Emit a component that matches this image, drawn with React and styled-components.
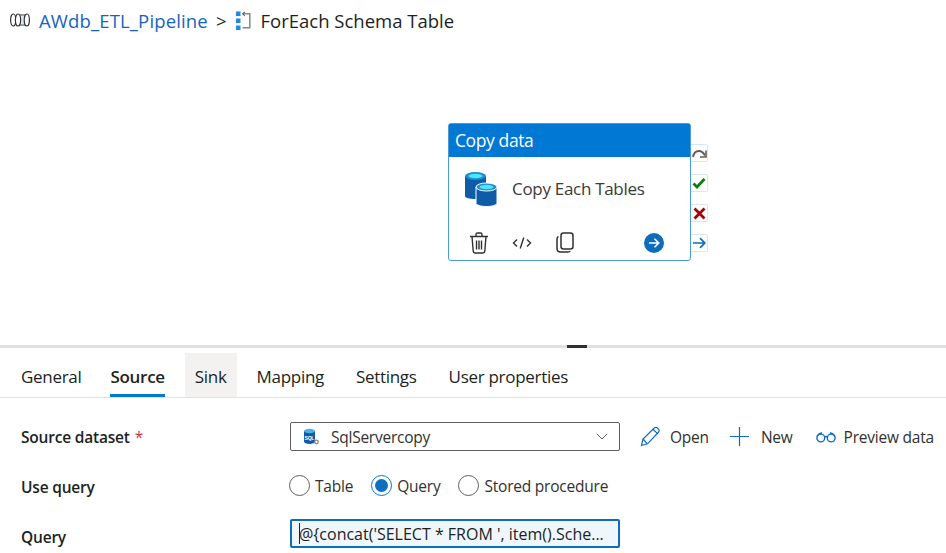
import styled, { createGlobalStyle } from "styled-components";

const Global = createGlobalStyle`
  html, body {
    margin: 0;
    padding: 0;
    background: #fff;
    overflow: hidden;
  }
  body {
    font-family: "Open Sans", "Noto Sans", sans-serif;
    color: #201f1e;
  }
`;

const Page = styled.div`
  width: 946px;
  height: 553px;
  display: flex;
  flex-direction: column;
  overflow: hidden;
`;

const Breadcrumb = styled.div`
  height: 40px;
  display: flex;
  align-items: center;
  padding-left: 10px;
  font-size: 18.5px;
  flex-shrink: 0;
`;

const PipelineLink = styled.span`
  color: #1565c0;
  margin-left: 9px;
  letter-spacing: 0.15px;
`;

const Sep = styled.span`
  margin: 0 10px 0 8px;
`;

const CrumbTitle = styled.span`
  margin-left: 9px;
`;

const Canvas = styled.div`
  height: 305px;
  position: relative;
  flex-shrink: 0;
`;

const Node = styled.div`
  position: absolute;
  left: 448px;
  top: 83px;
  width: 243px;
  height: 138px;
  box-sizing: border-box;
  border: 1.5px solid #4a9ad8;
  border-radius: 3px;
  background: #fff;
  display: flex;
  flex-direction: column;
`;

const NodeHead = styled.div`
  height: 33px;
  box-sizing: border-box;
  padding: 0 0 2px 6px;
  background: #0078d4;
  color: #fff;
  font-size: 17.5px;
  letter-spacing: -0.4px;
  display: flex;
  align-items: center;
  flex-shrink: 0;
`;

const NodeBody = styled.div`
  flex: 1;
  display: flex;
  align-items: center;
  gap: 14px;
  padding: 0 0 4px 15px;
  font-size: 17px;
  letter-spacing: -0.3px;
  color: #3b3a39;
`;

const NodeName = styled.span`
  padding-bottom: 2px;
`;

const NodeActions = styled.div`
  height: 35px;
  display: flex;
  align-items: center;
  padding: 0 26px 0 19px;
  flex-shrink: 0;
`;

const ActionIcon = styled.span`
  display: flex;
  width: 22px;
  justify-content: center;
  margin-right: ${(p) => p.$gap || 0}px;
`;

const RunDot = styled.span`
  margin-left: auto;
  display: flex;
`;

const Ports = styled.div`
  position: absolute;
  left: 242px;
  top: 20px;
  display: flex;
  flex-direction: column;
  gap: 12px;
`;

const Port = styled.div`
  width: 17px;
  height: 18px;
  box-sizing: border-box;
  border: 1.5px solid #d5e7f7;
  border-left: none;
  border-radius: 0 2px 2px 0;
  background: #fff;
  display: flex;
  align-items: center;
  justify-content: center;
`;

const Divider = styled.div`
  height: 3px;
  background: #e1e1e1;
  position: relative;
  flex-shrink: 0;
`;

const Grip = styled.span`
  position: absolute;
  left: 567px;
  top: 0;
  width: 20px;
  height: 3px;
  background: #323130;
`;

const Tabs = styled.div`
  height: 50px;
  box-sizing: border-box;
  border-bottom: 1px solid #e1e1e1;
  display: flex;
  padding-left: 6px;
  padding-top: 5px;
  flex-shrink: 0;
`;

const Tab = styled.div`
  height: 44px;
  padding: 3px ${(p) => (p.$hover ? 10 : 15)}px 0;
  margin-right: ${(p) => p.$after || 0}px;
  display: flex;
  align-items: center;
  box-sizing: border-box;
  position: relative;
  font-size: 17px;
  letter-spacing: -0.3px;
  font-weight: ${(p) => (p.$active ? 600 : 400)};
  background: ${(p) => (p.$hover ? "#f3f2f1" : "transparent")};
  &::after {
    content: "";
    display: ${(p) => (p.$active ? "block" : "none")};
    position: absolute;
    left: 15px;
    right: 15px;
    bottom: 0;
    height: 3px;
    background: #0078d4;
  }
`;

const Form = styled.div`
  display: grid;
  grid-template-columns: 269px 1fr;
  grid-auto-rows: 50px;
  padding: 14px 0 0 21px;
  align-items: center;
`;

const Label = styled.div`
  font-size: 15.5px;
  font-weight: 600;
  letter-spacing: -0.2px;
`;

const Star = styled.span`
  color: #d13438;
  margin-left: 5px;
  font-weight: 400;
`;

const DatasetRow = styled.div`
  display: flex;
  align-items: center;
  margin-bottom: 1px;
`;

const Select = styled.div`
  width: 330px;
  height: 29px;
  box-sizing: border-box;
  border: 1px solid #605e5c;
  border-radius: 2px;
  display: flex;
  align-items: center;
  padding: 0 11px 0 12px;
  font-size: 15.5px;
  letter-spacing: -0.25px;
  color: #323130;
  flex-shrink: 0;
`;

const SelectName = styled.span`
  margin-left: 12px;
  flex: 1;
`;

const Command = styled.div`
  display: flex;
  align-items: center;
  gap: ${(p) => p.$inner}px;
  margin-left: ${(p) => p.$gap}px;
  font-size: 15.5px;
  letter-spacing: -0.22px;
  color: #323130;
  white-space: nowrap;
`;

const Radios = styled.div`
  display: flex;
  align-items: center;
  margin-left: -1px;
  margin-bottom: 3px;
`;

const RadioItem = styled.div`
  display: flex;
  align-items: center;
  gap: 5px;
  margin-right: 18px;
  font-size: 15.5px;
  letter-spacing: -0.22px;
  color: #323130;
`;

const RadioMark = styled.span`
  width: 21px;
  height: 21px;
  box-sizing: border-box;
  border-radius: 50%;
  border: 1px solid ${(p) => (p.$on ? "#0078d4" : "#605e5c")};
  display: flex;
  align-items: center;
  justify-content: center;
  &::after {
    content: "";
    display: ${(p) => (p.$on ? "block" : "none")};
    width: 13px;
    height: 13px;
    border-radius: 50%;
    background: #106ebe;
  }
`;

const QueryBox = styled.div`
  width: 330px;
  height: 29px;
  box-sizing: border-box;
  margin-bottom: 7px;
  border: 2px solid #0f6cbd;
  border-radius: 2px;
  background: #eff6fc;
  display: flex;
  align-items: center;
  padding-left: 7px;
  font-size: 16px;
  font-weight: 500;
  color: #201f1e;
  white-space: nowrap;
  overflow: hidden;
`;

const Caret = styled.span`
  width: 1px;
  height: 21px;
  background: #201f1e;
  margin-right: -1px;
`;

const PipelineIcon = () => (
  <svg width="20" height="14" viewBox="0 0 20 14" fill="none" stroke="#323130" strokeWidth="1.200">
    <path d="M8 2.200h9M8 11.800h9" />
    <path d="M10 2.500h7v9h-7z" fill="#deecf9" stroke="none" />
    <ellipse cx="3.200" cy="7" rx="2.600" ry="6" />
    <ellipse cx="8" cy="7" rx="2.600" ry="6" fill="#fff" />
    <ellipse cx="16.800" cy="7" rx="2.600" ry="6" fill="#fff" />
  </svg>
);

const ForEachIcon = () => (
  <svg width="15" height="19" viewBox="0 0 15 19" fill="none">
    <rect x="0" y="0.500" width="4.500" height="4.500" fill="#1e88e5" />
    <rect x="0" y="7.500" width="4.500" height="4.500" fill="#1e88e5" />
    <rect x="0" y="14.500" width="4.500" height="4.500" fill="#1e88e5" />
    <path d="M7 2.800h6.800v14H6.500" stroke="#8a8886" strokeWidth="1.500" />
    <path d="M8.800.8 6.600 2.800 8.800 4.800" stroke="#605e5c" strokeWidth="1.100" />
  </svg>
);

const DbIcon = () => (
  <svg width="34" height="36" viewBox="0 0 34 36">
    <path d="M1 5v20c0 1.800 4.500 3 10.500 3S22 26.800 22 25V5z" fill="#0f5ba8" />
    <ellipse cx="11.500" cy="5" rx="10.500" ry="4" fill="#1b8fd0" />
    <ellipse cx="11.500" cy="5" rx="7" ry="2.200" fill="#50e6ff" />
    <path d="M12 16v16c0 2 4.500 3.500 10.500 3.500S33 34 33 32V16z" fill="#0f5ba8" stroke="#fff" strokeWidth="1" />
    <ellipse cx="22.500" cy="16" rx="10.500" ry="4" fill="#1b8fd0" stroke="#fff" strokeWidth="1" />
    <ellipse cx="22.500" cy="16" rx="7" ry="2.200" fill="#50e6ff" />
  </svg>
);

const TrashIcon = () => (
  <svg width="20" height="22" viewBox="0 0 20 22" fill="none" stroke="#323130" strokeWidth="1.400">
    <path d="M1 4.500h18M7 4.500V2.500Q7 1 8.500 1h3Q13 1 13 2.500v2M3 4.500l1.200 14.500Q4.400 21 6.500 21h7q2.100 0 2.300-2L17 4.500" />
    <path d="M7.500 8.500v9M10 8.500v9M12.500 8.500v9" />
  </svg>
);

const CodeIcon = () => (
  <svg width="20" height="14" viewBox="0 0 20 14" fill="none" stroke="#323130" strokeWidth="1.400">
    <path d="M5 3.500 1.500 7 5 10.500M15 3.500 18.500 7 15 10.500M11.800 1.500 8.200 12.500" />
  </svg>
);

const CopyIcon = () => (
  <svg width="18" height="21" viewBox="0 0 18 21" fill="none" stroke="#323130" strokeWidth="1.500">
    <rect x="5" y="1" width="12" height="16" rx="2.500" />
    <path d="M2.500 4.500Q1 5 1 7v9.500Q1 20 4.500 20H12q1.800 0 2.300-1" />
  </svg>
);

const RunIcon = () => (
  <svg width="20" height="20" viewBox="0 0 20 20" fill="none">
    <circle cx="10" cy="10" r="10" fill="#0f6cbd" />
    <path d="M5 10h9.500M10.500 5.800 14.700 10l-4.200 4.200" stroke="#fff" strokeWidth="1.600" />
  </svg>
);

const SkipGlyph = () => (
  <svg width="15" height="11" viewBox="0 0 15 11" fill="none" stroke="#605e5c" strokeWidth="2">
    <path d="M1 9Q2 3 7 3q3.500 0 6 4.500" />
    <path d="M14 2.500V9H8" strokeWidth="1.600" />
  </svg>
);

const CheckGlyph = () => (
  <svg width="14" height="12" viewBox="0 0 14 12" fill="none" stroke="#107c10" strokeWidth="2.800">
    <path d="M1.500 6.500 5 10 12.500 2" />
  </svg>
);

const CrossGlyph = () => (
  <svg width="13" height="13" viewBox="0 0 13 13" fill="none" stroke="#a80000" strokeWidth="2.800">
    <path d="M1.500 1.500 11.500 11.500M11.500 1.500 1.500 11.500" />
  </svg>
);

const ArrowGlyph = () => (
  <svg width="13" height="12" viewBox="0 0 13 12" fill="none" stroke="#0f6cbd" strokeWidth="1.700">
    <path d="M0 6h11.500M7 1.200 11.800 6 7 10.800" />
  </svg>
);

const SqlIcon = () => (
  <svg width="16" height="17" viewBox="0 0 16 17">
    <path d="M1 3v10.500c0 1.400 2.500 2.400 5.500 2.400s5.500-1 5.500-2.400V3z" fill="#0f5ba8" />
    <ellipse cx="6.500" cy="3" rx="5.500" ry="2.200" fill="#50b0e0" />
    <text x="1.600" y="11.500" fontSize="5" fontWeight="700" fill="#fff" fontFamily="Liberation Sans, sans-serif">SQL</text>
    <circle cx="13.500" cy="14" r="1.800" fill="#fff" stroke="#8a8886" strokeWidth="1.300" />
  </svg>
);

const Chevron = () => (
  <svg width="12" height="7" viewBox="0 0 12 7" fill="none" stroke="#605e5c" strokeWidth="1">
    <path d="M.8.8 6 6l5.200-5.200" />
  </svg>
);

const PencilIcon = () => (
  <svg width="21" height="21" viewBox="0 0 21 21" fill="none" stroke="#0f6cbd" strokeWidth="1.200">
    <path d="M1.500 19.500 3 13 14.500 1.800q1.300-1 2.600 0l1.600 1.600q1 1.300 0 2.600L7.500 17.800z" />
    <path d="M3 13l4.500 4.800M13 3.300l4.800 4.600" />
  </svg>
);

const PlusIcon = () => (
  <svg width="19" height="19" viewBox="0 0 19 19" fill="none" stroke="#0f6cbd" strokeWidth="1.200">
    <path d="M9.500 0v19M0 9.500h19" />
  </svg>
);

const GlassesIcon = () => (
  <svg width="20" height="12" viewBox="0 0 20 12" fill="none" stroke="#0f6cbd" strokeWidth="1.400">
    <circle cx="4.800" cy="7" r="3.900" />
    <circle cx="15.200" cy="7" r="3.900" />
    <path d="M8.500 6q1.500-1 3 0M1 5.500Q3 2 6 2M19 5.500Q17 2 14 2" />
  </svg>
);

export default function App() {
  return (
    <Page>
      <Global />
      <Breadcrumb>
        <PipelineIcon />
        <PipelineLink>AWdb_ETL_Pipeline</PipelineLink>
        <Sep>&gt;</Sep>
        <ForEachIcon />
        <CrumbTitle>ForEach Schema Table</CrumbTitle>
      </Breadcrumb>

      <Canvas>
        <Node>
          <NodeHead>Copy data</NodeHead>
          <NodeBody>
            <DbIcon />
            <NodeName>Copy Each Tables</NodeName>
          </NodeBody>
          <NodeActions>
            <ActionIcon $gap={21}><TrashIcon /></ActionIcon>
            <ActionIcon $gap={21}><CodeIcon /></ActionIcon>
            <ActionIcon><CopyIcon /></ActionIcon>
            <RunDot><RunIcon /></RunDot>
          </NodeActions>
          <Ports>
            <Port><SkipGlyph /></Port>
            <Port><CheckGlyph /></Port>
            <Port><CrossGlyph /></Port>
            <Port><ArrowGlyph /></Port>
          </Ports>
        </Node>
      </Canvas>

      <Divider><Grip /></Divider>

      <Tabs>
        <Tab $after={-1}>General</Tab>
        <Tab $active $after={5}>Source</Tab>
        <Tab $hover $after={5}>Sink</Tab>
        <Tab $after={2}>Mapping</Tab>
        <Tab $after={2}>Settings</Tab>
        <Tab>User properties</Tab>
      </Tabs>

      <Form>
        <Label>Source dataset<Star>*</Star></Label>
        <DatasetRow>
          <Select>
            <SqlIcon />
            <SelectName>SqlServercopy</SelectName>
            <Chevron />
          </Select>
          <Command $gap={20} $inner={9}><PencilIcon />Open</Command>
          <Command $gap={21} $inner={12}><PlusIcon />New</Command>
          <Command $gap={23} $inner={8}><GlassesIcon />Preview data</Command>
        </DatasetRow>

        <Label>Use query</Label>
        <Radios>
          <RadioItem><RadioMark />Table</RadioItem>
          <RadioItem><RadioMark $on />Query</RadioItem>
          <RadioItem><RadioMark />Stored procedure</RadioItem>
        </Radios>

        <Label>Query</Label>
        <QueryBox><Caret />@&#123;concat('SELECT * FROM ', item().Sche...</QueryBox>
      </Form>
    </Page>
  );
}
